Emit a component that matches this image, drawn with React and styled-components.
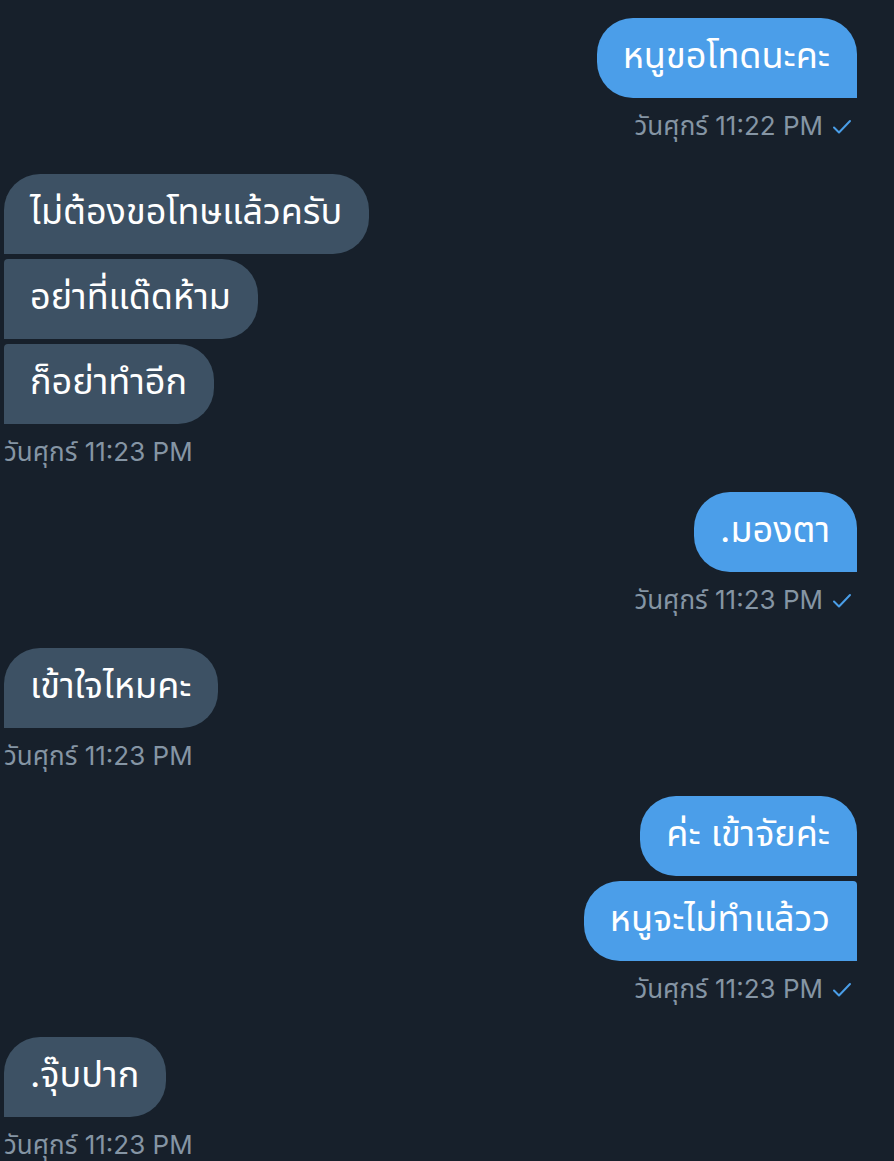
import React from "react";
import styled, { createGlobalStyle } from "styled-components";

const GlobalStyle = createGlobalStyle`
  html, body {
    margin: 0;
    padding: 0;
    background: #17202b;
  }
  body {
    font-family: Inter, "Noto Sans Thai", "Noto Sans Thai UI", Loma, Garuda, "Noto Sans", sans-serif;
    -webkit-font-smoothing: antialiased;
  }
`;

const Thread = styled.div`
  width: 894px;
  height: 1161px;
  overflow: hidden;
  box-sizing: border-box;
  padding: 18px 37px 0 4px;
  display: flex;
  flex-direction: column;
  background: #17202b;
`;

const Group = styled.div`
  display: flex;
  flex-direction: column;
  align-items: ${(p) => (p.$mine ? "flex-end" : "flex-start")};
  gap: 5px;
  margin-top: ${(p) => (p.$first ? 0 : p.$mine ? 24 : 32)}px;
`;

const Bubble = styled.div`
  box-sizing: border-box;
  height: 80px;
  display: flex;
  align-items: center;
  padding: 0 27px 2px 26px;
  font-size: 36px;
  color: #ffffff;
  white-space: nowrap;
  background: ${(p) => (p.$mine ? "#4b9ee9" : "#3d5164")};
  border-radius: ${(p) => p.$radius};
`;

const Stamp = styled.div`
  margin-top: 9px;
  display: flex;
  align-items: center;
  gap: 9px;
  height: 30px;
  font-size: 26px;
  color: #8595a4;
  padding-right: ${(p) => (p.$mine ? 5 : 0)}px;
`;

const Check = () => (
  <svg width="20" height="16" viewBox="0 0 20 16">
    <polyline
      points="2,8.5 7,13.5 18,2"
      fill="none"
      stroke="#4a9ee8"
      strokeWidth="2"
      strokeLinecap="round"
      strokeLinejoin="round"
    />
  </svg>
);

const groups = [
  { mine: true, time: "วันศุกร์ 11:22 PM", lines: ["หนูขอโทดนะคะ"] },
  {
    mine: false,
    time: "วันศุกร์ 11:23 PM",
    lines: ["ไม่ต้องขอโทษแล้วครับ", "อย่าที่แด๊ดห้าม", "ก็อย่าทำอีก"],
  },
  { mine: true, time: "วันศุกร์ 11:23 PM", lines: [".มองตา"] },
  { mine: false, time: "วันศุกร์ 11:23 PM", lines: ["เข้าใจไหมคะ"] },
  {
    mine: true,
    time: "วันศุกร์ 11:23 PM",
    lines: ["ค่ะ เข้าจัยค่ะ", "หนูจะไม่ทำแล้วว"],
  },
  { mine: false, time: "วันศุกร์ 11:23 PM", lines: [".จุ๊บปาก"] },
];

const R = "36px";

const radiusFor = (mine, index) => {
  const top = index === 0 ? R : "4px";
  // tl tr br bl
  return mine ? `${R} ${top} 0 ${R}` : `${top} ${R} ${R} 0`;
};

export default function App() {
  return (
    <>
      <GlobalStyle />
      <Thread>
        {groups.map((group, gi) => (
          <Group key={gi} $mine={group.mine} $first={gi === 0}>
            {group.lines.map((line, li) => (
              <Bubble
                key={li}
                $mine={group.mine}
                $radius={radiusFor(group.mine, li)}
              >
                {line}
              </Bubble>
            ))}
            <Stamp $mine={group.mine}>
              {group.time}
              {group.mine && <Check />}
            </Stamp>
          </Group>
        ))}
      </Thread>
    </>
  );
}
